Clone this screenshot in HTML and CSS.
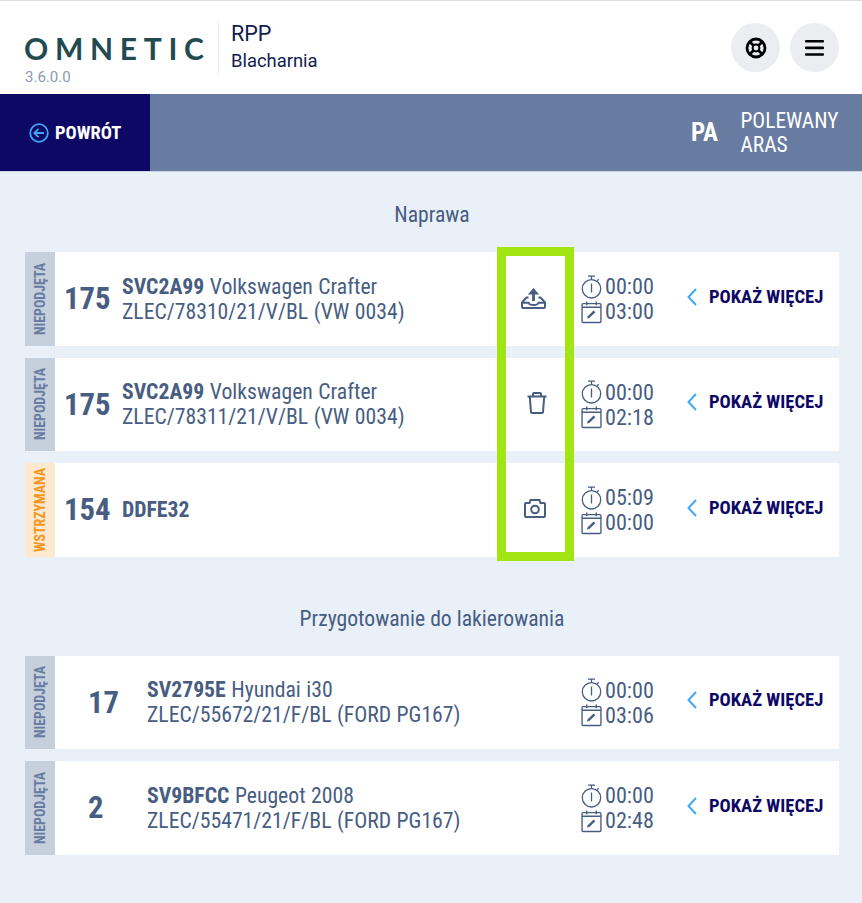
FILE: index.html
```html
<!DOCTYPE html>
<html lang="pl">
<head>
<meta charset="utf-8">
<title>Omnetic RPP</title>
<link rel="stylesheet" href="styles.css">
</head>
<body>
<svg class="defs" width="0" height="0">
  <defs>
    <symbol id="stopwatch" viewBox="0 0 20 24">
      <path d="M6.500 1.200h7M10 1.200v3.300M15.700 5.800l1.500-1.500" fill="none" stroke="currentColor" stroke-width="1.300"/>
      <circle cx="10" cy="13.800" r="9.200" fill="none" stroke="currentColor" stroke-width="1.300"/>
      <path d="M10 8.500v9" fill="none" stroke="currentColor" stroke-width="1.300"/>
    </symbol>
    <symbol id="calendar" viewBox="0 0 20 22">
      <rect x="1" y="3" width="18" height="18" rx="1" fill="none" stroke="currentColor" stroke-width="1.300"/>
      <path d="M1 6.500h18M5.500 1v3.500M14.500 1v3.500" fill="none" stroke="currentColor" stroke-width="1.300"/>
      <path d="M5.800 17.200l.4-2 5.800-5.700 1.700 1.700-5.800 5.600z" fill="currentColor"/>
    </symbol>
    <symbol id="chevron" viewBox="0 0 12 18">
      <path d="M10 1L2.500 9l7.500 8" fill="none" stroke="currentColor" stroke-width="2"/>
    </symbol>
  </defs>
</svg>

<header class="top">
  <div class="brand">
    <div class="logo">OMNETIC</div>
    <div class="version">3.6.0.0</div>
  </div>
  <div class="module">
    <div class="module-name">RPP</div>
    <div class="module-sub">Blacharnia</div>
  </div>
  <div class="top-actions">
    <button class="round" aria-label="Pomoc">
      <svg width="24" height="24" viewBox="0 0 24 24" fill="none" stroke="#000" stroke-width="2.800">
        <circle cx="12" cy="12" r="9"/>
        <circle cx="12" cy="12" r="3.400" stroke-width="2"/>
        <path d="M5.500 5.500l4 4M18.500 5.500l-4 4M5.500 18.500l4-4M18.500 18.500l-4-4"/>
      </svg>
    </button>
    <button class="round" aria-label="Menu">
      <svg width="20" height="18" viewBox="0 0 20 18" fill="#000">
        <rect y="1" width="19" height="2.600" rx="1"/>
        <rect y="7.600" width="19" height="2.600" rx="1"/>
        <rect y="14.200" width="19" height="2.600" rx="1"/>
      </svg>
    </button>
  </div>
</header>

<nav class="bar">
  <a class="back">
    <svg width="20" height="20" viewBox="0 0 20 20" fill="none" stroke="#3fa4f5" stroke-width="1.800">
      <circle cx="10" cy="10" r="8.800"/>
      <path d="M15 10H5.500M9.500 5.800L5.300 10l4.200 4.200"/>
    </svg>
    <span>POWRÓT</span>
  </a>
  <div class="user">
    <span class="initials">PA</span>
    <span class="user-name">POLEWANY<br>ARAS</span>
  </div>
</nav>

<main class="content">
  <section class="section">
    <h2 class="section-title">Naprawa</h2>
    <div class="rows">
      <article class="row">
        <div class="status"><span>NIEPODJĘTA</span></div>
        <div class="num">175</div>
        <div class="info"><div><b>SVC2A99</b> Volkswagen Crafter</div><div>ZLEC/78310/21/V/BL (VW 0034)</div></div>
        <div class="action">
          <svg class="ico-tray" width="25" height="22" viewBox="0 0 25 22" fill="none" stroke="#475d82" stroke-width="2">
            <path d="M7.500 10.500H5.500L1 15.500V20a1 1 0 0 0 1 1h21a1 1 0 0 0 1-1v-4.500l-4.500-5h-2"/>
            <path d="M1 15.700h6.500c.6 1.800 2.500 2.300 5 2.300s4.400-.5 5-2.300H24"/>
            <path d="M12.500 14V5" stroke-width="2.800"/>
            <path d="M6.800 7.500L12.500 1l5.700 6.500z" fill="#475d82" stroke="none"/>
          </svg>
        </div>
        <div class="times"><div class="time"><svg class="ti"><use href="#stopwatch"/></svg>00:00</div><div class="time"><svg class="ti"><use href="#calendar"/></svg>03:00</div></div>
        <a class="more"><svg class="chev"><use href="#chevron"/></svg>POKAŻ WIĘCEJ</a>
      </article>
      <article class="row">
        <div class="status"><span>NIEPODJĘTA</span></div>
        <div class="num">175</div>
        <div class="info"><div><b>SVC2A99</b> Volkswagen Crafter</div><div>ZLEC/78311/21/V/BL (VW 0034)</div></div>
        <div class="action">
          <svg class="ico-trash" width="20" height="22" viewBox="0 0 20 22" fill="none" stroke="#475d82" stroke-width="2">
            <path d="M.5 4.500h19M6 4.500V2a1 1 0 0 1 1-1h6a1 1 0 0 1 1 1v2.500"/>
            <path d="M2.800 5l1.200 15a1 1 0 0 0 1 1h10a1 1 0 0 0 1-1l1.200-15"/>
          </svg>
        </div>
        <div class="times"><div class="time"><svg class="ti"><use href="#stopwatch"/></svg>00:00</div><div class="time"><svg class="ti"><use href="#calendar"/></svg>02:18</div></div>
        <a class="more"><svg class="chev"><use href="#chevron"/></svg>POKAŻ WIĘCEJ</a>
      </article>
      <article class="row">
        <div class="status held"><span>WSTRZYMANA</span></div>
        <div class="num">154</div>
        <div class="info"><div><b>DDFE32</b></div></div>
        <div class="action">
          <svg width="22" height="19" viewBox="0 0 22 19" fill="none" stroke="#475d82" stroke-width="2">
            <path d="M2 4h3.500l1-3h9l1 3H20a1 1 0 0 1 1 1v12a1 1 0 0 1-1 1H2a1 1 0 0 1-1-1V5a1 1 0 0 1 1-1z"/>
            <circle cx="11" cy="10.500" r="3.800"/>
          </svg>
        </div>
        <div class="times"><div class="time"><svg class="ti"><use href="#stopwatch"/></svg>05:09</div><div class="time"><svg class="ti"><use href="#calendar"/></svg>00:00</div></div>
        <a class="more"><svg class="chev"><use href="#chevron"/></svg>POKAŻ WIĘCEJ</a>
      </article>
      <div class="highlight"></div>
    </div>
  </section>

  <section class="section second">
    <h2 class="section-title">Przygotowanie do lakierowania</h2>
    <div class="rows">
      <article class="row wide">
        <div class="status"><span>NIEPODJĘTA</span></div>
        <div class="num">17</div>
        <div class="info"><div><b>SV2795E</b> Hyundai i30</div><div>ZLEC/55672/21/F/BL (FORD PG167)</div></div>
        <div class="times"><div class="time"><svg class="ti"><use href="#stopwatch"/></svg>00:00</div><div class="time"><svg class="ti"><use href="#calendar"/></svg>03:06</div></div>
        <a class="more"><svg class="chev"><use href="#chevron"/></svg>POKAŻ WIĘCEJ</a>
      </article>
      <article class="row wide">
        <div class="status"><span>NIEPODJĘTA</span></div>
        <div class="num">2</div>
        <div class="info"><div><b>SV9BFCC</b> Peugeot 2008</div><div>ZLEC/55471/21/F/BL (FORD PG167)</div></div>
        <div class="times"><div class="time"><svg class="ti"><use href="#stopwatch"/></svg>00:00</div><div class="time"><svg class="ti"><use href="#calendar"/></svg>02:48</div></div>
        <a class="more"><svg class="chev"><use href="#chevron"/></svg>POKAŻ WIĘCEJ</a>
      </article>
    </div>
  </section>
</main>
</body>
</html>
```

FILE: styles.css
```css
* { box-sizing: border-box; }
html, body { margin: 0; height: 100%; }
body {
  background: #e9f0f7;
  font-family: "Roboto Condensed", Roboto, sans-serif;
  font-stretch: 75%;
  color: #475d82;
  overflow: hidden;
}
.defs { position: absolute; }

.top {
  height: 94px;
  background: #fff;
  border-top: 1px solid #dedede;
  display: flex;
  align-items: flex-start;
  padding: 0 23px 0 25px;
}
.brand { width: 193px; padding-top: 31px; }
.logo {
  font-family: "Lato", sans-serif;
  font-stretch: normal;
  font-size: 30px;
  line-height: 32px;
  font-weight: 700;
  letter-spacing: 6.700px;
  color: #234a50;
  white-space: nowrap;
  margin-left: -1px;
}
.version {
  font-family: Roboto, sans-serif;
  font-stretch: normal;
  font-size: 15px;
  line-height: 16px;
  color: #8c99b3;
  margin-top: 5px;
}
.module {
  margin-top: 20px;
  height: 54px;
  border-left: 1px solid #eceef1;
  padding-left: 12px;
  font-family: Roboto, sans-serif;
  font-stretch: normal;
  color: #0f2150;
}
.module-name { font-size: 21.500px; line-height: 26px; }
.module-sub { font-size: 18.400px; line-height: 28px; }
.top-actions { margin-left: auto; display: flex; gap: 10px; margin-top: 22px; }
.round {
  width: 49px;
  height: 49px;
  border: 0;
  padding: 0;
  border-radius: 50%;
  background: #ecedf1;
  display: flex;
  align-items: center;
  justify-content: center;
}

.bar {
  height: 78px;
  background: #687ba1;
  border-bottom: 1px solid #c9d4e3;
  display: flex;
  align-items: stretch;
  justify-content: space-between;
}
.back {
  width: 150px;
  background: #0e0865;
  color: #fff;
  display: flex;
  align-items: center;
  padding-left: 29px;
  gap: 6px;
  font-size: 18.500px;
  font-weight: 700;
}
.user { display: flex; align-items: center; color: #fff; padding-right: 22px; }
.initials { font-size: 25px; font-weight: 700; width: 49.500px; }
.user-name { font-size: 21.400px; line-height: 24px; width: 99.500px; }

.content { padding: 0 23px 0 25px; }
.section { padding-top: 29px; }
.section.second { padding-top: 48.200px; }
.section-title {
  margin: 0 0 23px;
  font-size: 21.650px;
  line-height: 28px;
  font-weight: 400;
  text-align: center;
}
.rows { position: relative; display: flex; flex-direction: column; gap: 12px; }
.row {
  height: 93.500px;
  background: #fff;
  display: flex;
  align-items: center;
}
.status {
  width: 30px;
  align-self: stretch;
  background: #c6cfdc;
  color: #687ba1;
  display: flex;
  align-items: center;
  justify-content: center;
  font-size: 13.900px;
  font-weight: 700;
}
.status span { writing-mode: vertical-rl; transform: rotate(180deg); white-space: nowrap; }
.status.held { background: #fde9d0; color: #f7951d; }
.num {
  width: 67px;
  padding-left: 9px;
  font-size: 30.700px;
  font-weight: 700;
  flex: none;
}
.row.wide .num { width: 92px; padding-left: 33px; }
.info { flex: 1; font-size: 21.700px; line-height: 25px; white-space: nowrap; min-width: 0; word-spacing: 0.5px; }
.info b { font-weight: 700; }
.action { width: 78px; display: flex; justify-content: center; flex: none; margin-right: 6px; padding-bottom: 2px; }
.ico-tray { margin-right: 3px; }
.ico-trash { margin-left: 3px; }
.times { width: 106px; flex: none; font-size: 22.100px; line-height: 25px; padding-top: 1px; }
.time { display: flex; align-items: center; gap: 3px; padding-left: 1px; }
.ti { width: 21px; height: 24px; flex: none; }
.more {
  width: 153px;
  flex: none;
  display: flex;
  align-items: center;
  gap: 11px;
  color: #0e0865;
  font-size: 18.600px;
  font-weight: 700;
  white-space: nowrap;
  padding-bottom: 4px;
}
.chev { width: 12px; height: 18px; color: #3fa9f5; flex: none; }
.highlight {
  position: absolute;
  left: 472px;
  top: -5.500px;
  width: 77px;
  height: 314.500px;
  border: 9px solid #a3e512;
  pointer-events: none;
}
```
